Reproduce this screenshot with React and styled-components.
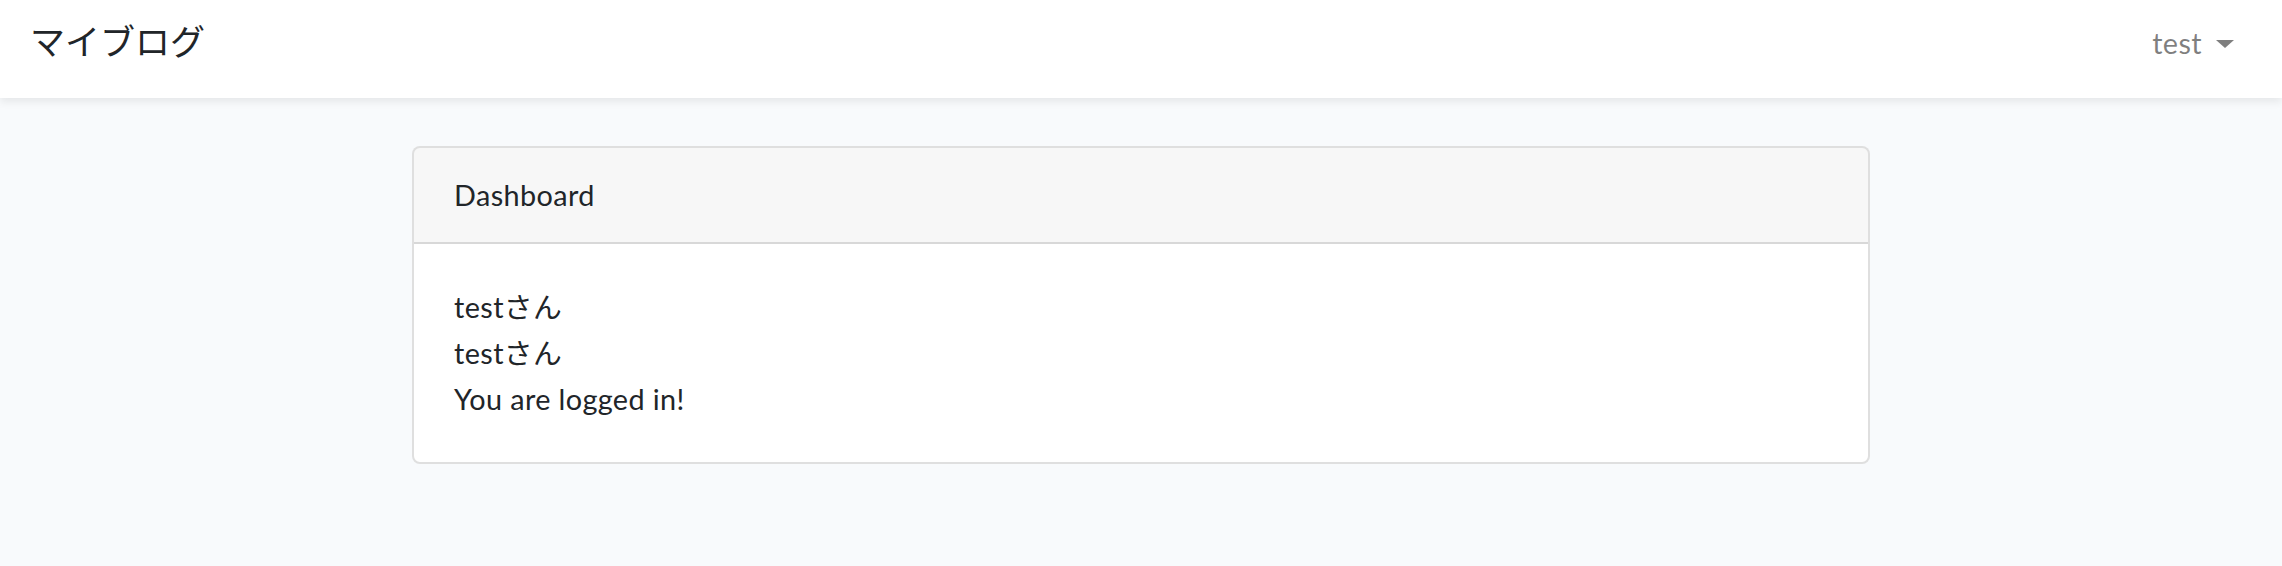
import React from 'react';
import styled, { createGlobalStyle } from 'styled-components';

const GlobalStyle = createGlobalStyle`
  html, body {
    margin: 0;
    padding: 0;
  }
  body {
    background-color: #f8fafc;
    color: #212529;
    font-family: Lato, "Noto Sans CJK JP", sans-serif;
    font-size: 28.8px;
    line-height: 1.6;
    letter-spacing: 0.4px;
  }
`;

const Navbar = styled.nav`
  display: flex;
  justify-content: space-between;
  align-items: center;
  height: 98px;
  padding: 0 32px 0 30px;
  box-sizing: border-box;
  background-color: #ffffff;
  box-shadow: 0 4px 8px rgba(0, 0, 0, 0.075);
`;

const Brand = styled.a`
  font-size: 35px;
  line-height: 1;
  letter-spacing: 0;
  color: #212529;
  text-decoration: none;
  margin-top: -15px;
`;

const UserToggle = styled.a`
  display: flex;
  align-items: center;
  padding: 0 16px;
  margin-top: -12px;
  color: rgba(0, 0, 0, 0.5);
  text-decoration: none;

  &::after {
    content: '';
    display: inline-block;
    margin-left: 14px;
    margin-top: 2px;
    border-top: 8px solid;
    border-right: 9px solid transparent;
    border-left: 9px solid transparent;
  }
`;

const Main = styled.main`
  padding: 48px 0;
  display: flex;
  justify-content: center;
`;

const Column = styled.div`
  width: 100%;
  max-width: 1458px;
`;

const Card = styled.div`
  background-color: #ffffff;
  border: 2px solid rgba(0, 0, 0, 0.125);
  border-radius: 8px;
  overflow: hidden;
`;

const CardHeader = styled.div`
  padding: 24px 40px;
  background-color: rgba(0, 0, 0, 0.03);
  border-bottom: 2px solid rgba(0, 0, 0, 0.125);
`;

const CardBody = styled.div`
  padding: 40px;
`;

const Line = styled.div`
  height: 46px;
`;

export default function App() {
  return (
    <>
      <GlobalStyle />
      <Navbar>
        <Brand href="#">マイブログ</Brand>
        <UserToggle href="#">test</UserToggle>
      </Navbar>
      <Main>
        <Column>
          <Card>
            <CardHeader>Dashboard</CardHeader>
            <CardBody>
              <Line>testさん</Line>
              <Line>testさん</Line>
              <Line>You are logged in!</Line>
            </CardBody>
          </Card>
        </Column>
      </Main>
    </>
  );
}
